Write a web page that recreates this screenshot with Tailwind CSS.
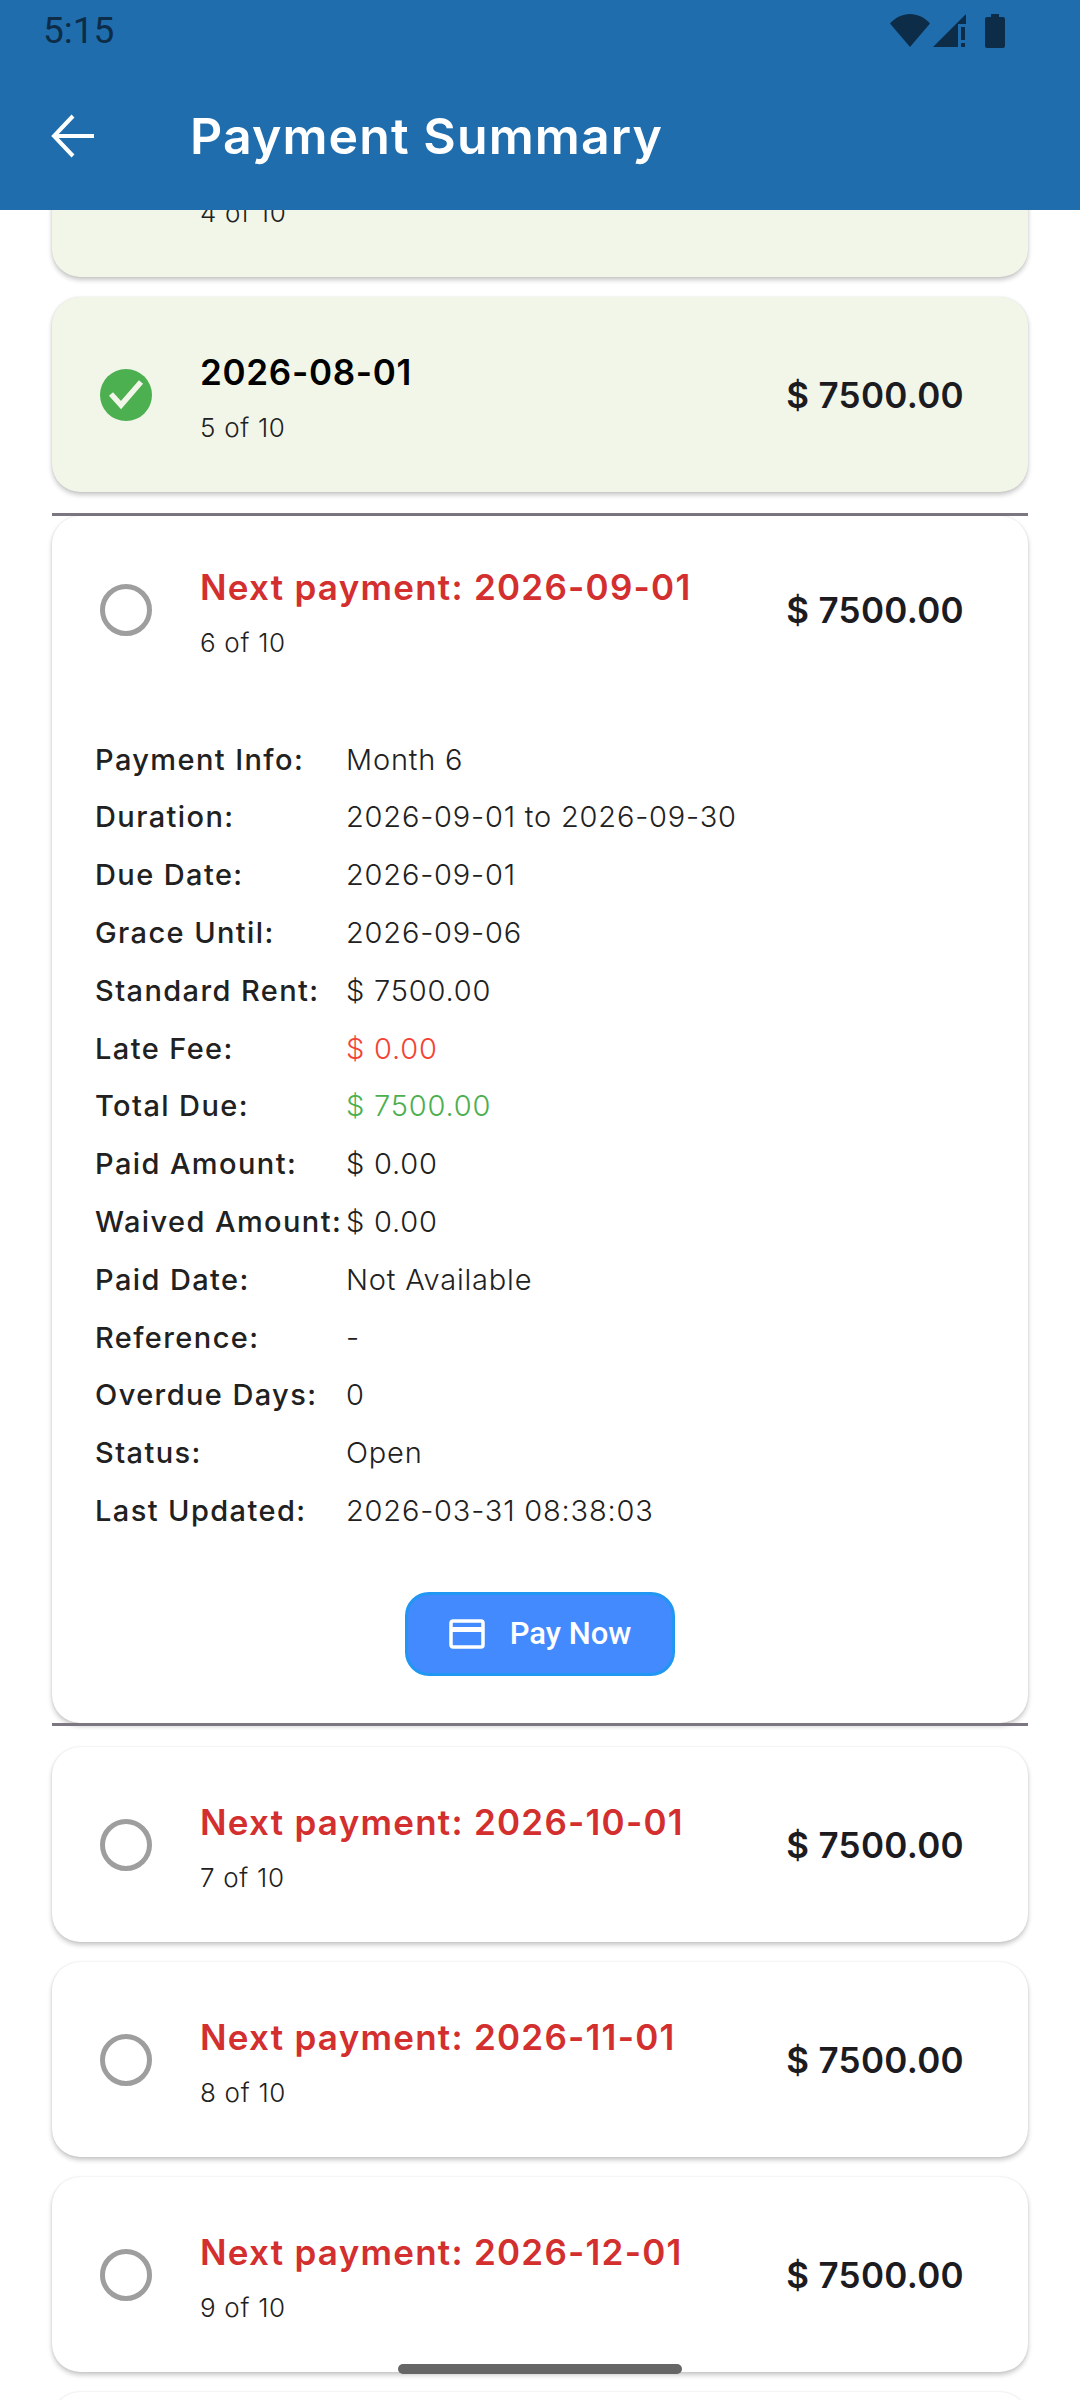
<!DOCTYPE html>
<html lang="en">
<head>
  <meta charset="UTF-8" />
  <title>Payment Summary</title>
  <script src="https://cdn.jsdelivr.net/npm/@tailwindcss/browser@4"></script>
</head>
<body class="bg-white font-['Inter',sans-serif]">
  <div class="relative w-[1080px] h-[2400px] overflow-hidden bg-white">
    <!-- app bar + status bar -->
    <header class="relative z-10 h-[210px] bg-[#1f6dad]">
      <div class="flex items-center justify-between h-[62px] pl-[43px] pr-[75px]">
        <span class="font-['Roboto',sans-serif] text-[37px] leading-[62px] text-[#0d2c47]">5:15</span>
        <div class="flex items-start h-[34px] text-[#0d2c47]">
          <svg class="w-[40px] h-[34px]" viewBox="0 0 40 34" fill="currentColor"><path d="M0 9.500C5.500 3.500 12.500 0 20 0s14.500 3.500 20 9.500L20 33z"/></svg>
          <svg class="ml-[3px] w-[33px] h-[34px]" viewBox="0 0 33 34" fill="currentColor"><path d="M0 33L33 0v10h-8v23z"/><path d="M28 13h4v13h-4zM28 29h4v4h-4z"/></svg>
          <svg class="ml-[19px] w-[20px] h-[34px]" viewBox="0 0 20 34" fill="currentColor"><path d="M6 0h8v3h4a2 2 0 0 1 2 2v27a2 2 0 0 1-2 2H2a2 2 0 0 1-2-2V5a2 2 0 0 1 2-2h4z"/></svg>
        </div>
      </div>
      <div class="flex items-center h-[148px]">
        <svg class="ml-[50px] w-[46px] h-[44px]" viewBox="0 0 46 44" fill="none" stroke="white" stroke-width="4"><path d="M44 22H5M23 2L4 22l19 20"/></svg>
        <h1 class="ml-[94px] text-[50px] leading-[60px] font-semibold text-white tracking-[1.1px] whitespace-nowrap">Payment Summary</h1>
      </div>
    </header>

    <!-- list is scrolled, first card sits under the app bar -->
    <main id="list" class="flex flex-col mx-[52px] mt-[-128px]"></main>

    <div class="absolute z-20 left-[398px] top-[2364px] w-[284px] h-[10px] rounded-full bg-[#666666]"></div>
  </div>

  <script>
    const details = [
      ['Payment Info:', 'Month 6', 'text-[#212121]'],
      ['Duration:', '2026-09-01 to 2026-09-30', 'text-[#212121]'],
      ['Due Date:', '2026-09-01', 'text-[#212121]'],
      ['Grace Until:', '2026-09-06', 'text-[#212121]'],
      ['Standard Rent:', '$ 7500.00', 'text-[#212121]'],
      ['Late Fee:', '$ 0.00', 'text-[#f44336]'],
      ['Total Due:', '$ 7500.00', 'text-[#4caf50]'],
      ['Paid Amount:', '$ 0.00', 'text-[#212121]'],
      ['Waived Amount:', '$ 0.00', 'text-[#212121]'],
      ['Paid Date:', 'Not Available', 'text-[#212121]'],
      ['Reference:', '-', 'text-[#212121]'],
      ['Overdue Days:', '0', 'text-[#212121]'],
      ['Status:', 'Open', 'text-[#212121]'],
      ['Last Updated:', '2026-03-31 08:38:03', 'text-[#212121]']
    ];

    const checkIcon = `
      <svg class="w-[52px] h-[52px] shrink-0" viewBox="0 0 52 52">
        <circle cx="26" cy="26" r="26" fill="#4caf50"/>
        <path d="M11 25l10 11 20-23" fill="none" stroke="#f1f6e9" stroke-width="5.500"/>
      </svg>`;
    const openIcon = `
      <svg class="w-[52px] h-[52px] shrink-0" viewBox="0 0 52 52">
        <circle cx="26" cy="26" r="23.500" fill="none" stroke="#9e9e9e" stroke-width="5"/>
      </svg>`;

    function row(paid, title, sub, rowClass) {
      const titleClass = paid
        ? 'text-black font-semibold tracking-[0.7px]'
        : 'text-[#d32f2f] font-semibold tracking-[1.25px]';
      return `
        <div class="flex items-center h-[195px] pl-[48px] pr-[64px] ${rowClass}">
          ${paid ? checkIcon : openIcon}
          <div class="ml-[48px] flex-1 pt-[3px]">
            <div class="text-[35px] leading-[54px] ${titleClass}">${title}</div>
            <div class="mt-[8px] text-[26px] leading-[41px] text-[#212121] font-light tracking-[0.7px]">${sub}</div>
          </div>
          <div class="text-[35px] leading-[54px] font-semibold text-[#1c1b1f] tracking-[0.3px]">$ 7500.00</div>
        </div>`;
    }

    const cardShadow = 'shadow-[0_3px_5px_rgba(0,0,0,0.22),0_0_2px_rgba(0,0,0,0.1)]';

    function card(paid, title, sub) {
      const bg = paid ? 'bg-[#f1f6e9]' : 'bg-white';
      return `<section class="mb-[20px] rounded-[28px] ${bg} ${cardShadow}">${row(paid, title, sub, '')}</section>`;
    }

    const detailRows = details.map(([label, value, color]) => `
      <div class="flex items-center h-[57.8px] text-[29px]">
        <span class="w-[251px] shrink-0 font-medium text-[#212121] whitespace-nowrap tracking-[1.4px]">${label}</span>
        <span class="font-light tracking-[0.8px] ${color}">${value}</span>
      </div>`).join('');

    const expanded = `
      <div class="h-[3px] mt-[1px] bg-[#7b7680]"></div>
      <section class="rounded-[28px] bg-white h-[1207px] ${cardShadow}">
        ${row(false, 'Next payment: 2026-09-01', '6 of 10', 'mt-[-4px]')}
        <div class="pl-[43px] pt-[23.500px]">${detailRows}</div>
        <div class="flex justify-center mt-[52.500px]">
          <button class="flex items-center justify-center w-[270px] h-[84px] rounded-[24px] border-[3px] border-[#2196f3] bg-[#448aff] text-white font-['Roboto',sans-serif] font-medium text-[31px]">
            <svg class="w-[36px] h-[30px] mr-[25px]" viewBox="0 0 36 30" fill="none" stroke="white" stroke-width="3.500"><rect x="2" y="2" width="32" height="26" rx="2"/><path d="M2 10.500h32" stroke-width="5"/></svg>
            Pay Now
          </button>
        </div>
      </section>
      <div class="h-[3px] bg-[#7b7680] mb-[21px]"></div>`;

    document.getElementById('list').innerHTML =
      card(true, '&nbsp;', '4 of 10') +
      card(true, '2026-08-01', '5 of 10') +
      expanded +
      card(false, 'Next payment: 2026-10-01', '7 of 10') +
      card(false, 'Next payment: 2026-11-01', '8 of 10') +
      card(false, 'Next payment: 2026-12-01', '9 of 10') +
      `<section class="h-[195px] rounded-[28px] bg-white ${cardShadow}"></section>`;
  </script>
</body>
</html>
